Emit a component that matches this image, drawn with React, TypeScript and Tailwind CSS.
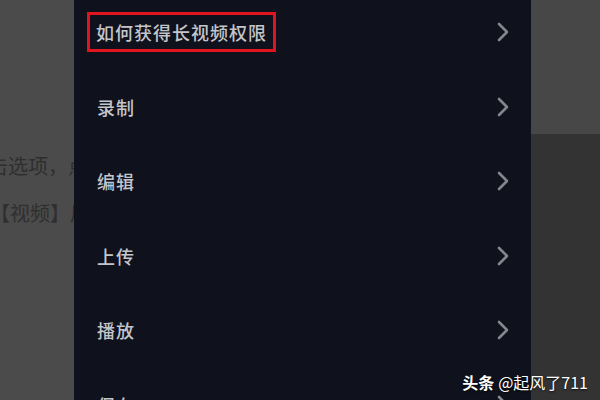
const items = ['如何获得长视频权限', '录制', '编辑', '上传', '播放', '保存'];

function Chevron() {
    return (
        <svg width="14" height="22" viewBox="0 0 14 22" fill="none">
            <polyline
                points="3,3 11,11 3,19"
                stroke="#85858d"
                strokeWidth="2.6"
                strokeLinecap="round"
                strokeLinejoin="round"
            />
        </svg>
    );
}

export default function App() {
    return (
        <div
            className="relative flex h-[400px] w-[600px] overflow-hidden bg-[#0f121c]"
            style={{ fontFamily: '"Noto Sans CJK SC", "Noto Sans", sans-serif' }}
        >
            <div className="w-[74px] shrink-0 overflow-hidden bg-[#4b4b4b] pt-[142px] text-[20px] leading-[47px] text-[#2f2f2f]">
                <p className="-ml-[12px] whitespace-nowrap">击选项，点</p>
                <p className="-ml-[10px] whitespace-nowrap">【视频】后</p>
            </div>

            <div className="-mt-[5px] flex flex-1 flex-col">
                {items.map((item, i) => (
                    <div
                        key={item}
                        className="flex h-[74.5px] shrink-0 items-center justify-between pl-[23px] pr-[21px]"
                    >
                        {i === 0 ? (
                            <span className="-ml-[10px] border-[3px] border-[#e3141d] px-[6px] py-[4px] text-[18px] font-medium leading-[26px] tracking-[1px] text-[#c4c5cb]">
                                {item}
                            </span>
                        ) : (
                            <span className="text-[18px] font-medium leading-[26px] tracking-[1px] text-[#c4c5cb]">
                                {item}
                            </span>
                        )}
                        <Chevron />
                    </div>
                ))}
            </div>

            <div className="flex w-[69px] shrink-0 flex-col">
                <div className="h-[134px] bg-[#474747]" />
                <div className="flex-1 bg-[#333333]" />
            </div>

            <div className="absolute bottom-[8px] right-[12px] flex items-baseline gap-[4px] whitespace-nowrap text-[16px] leading-[20px] text-white [text-shadow:0_1px_2px_rgba(0,0,0,0.8)]">
                <span className="font-bold">头条</span>
                <span>@起风了711</span>
            </div>
        </div>
    );
}
